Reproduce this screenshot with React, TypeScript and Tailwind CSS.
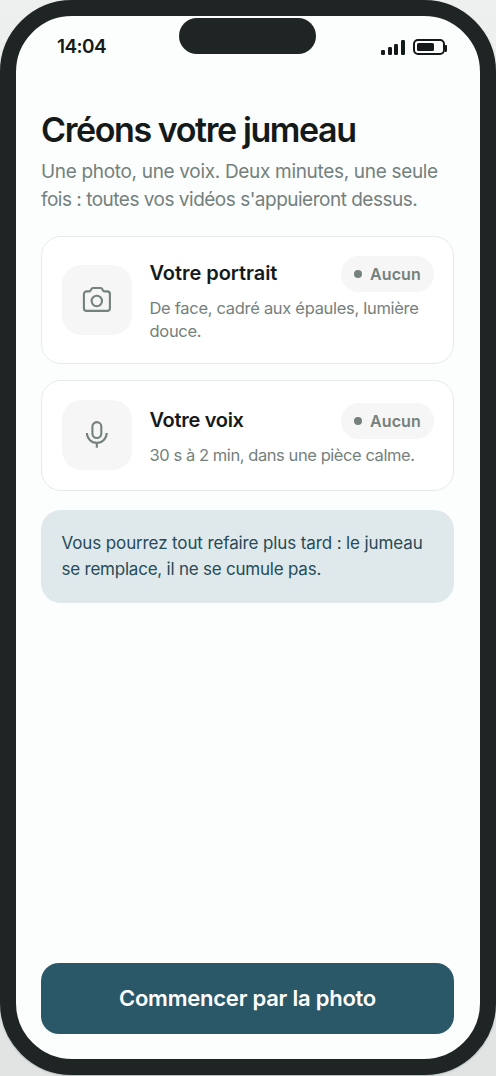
import React from "react";

type StepCardProps = {
  title: string;
  titleClass: string;
  status: string;
  icon: React.ReactNode;
  className: string;
  bodyClass?: string;
  children: React.ReactNode;
};

const CameraIcon = () => (
  <svg width="30" height="30" viewBox="0 0 30 30" fill="none" stroke="currentColor" strokeWidth="2.1" strokeLinejoin="round">
    <path d="M4.6 6.4h2.1c.9 0 1.5-.3 1.9-1l.8-1.4c.3-.7.8-1 1.5-1h7.8c.7 0 1.2.3 1.5 1l.8 1.4c.4.7 1 1 1.9 1h2.3a2.7 2.7 0 0 1 2.7 2.7v14.1a2.7 2.7 0 0 1-2.7 2.7H4.6a2.7 2.7 0 0 1-2.7-2.7V9.1a2.7 2.7 0 0 1 2.7-2.7Z" />
    <circle cx="14.8" cy="16" r="5.2" />
  </svg>
);

const MicIcon = () => (
  <svg width="30" height="30" viewBox="0 0 30 30" fill="none" stroke="currentColor" strokeWidth="2.1">
    <rect x="10.4" y="2.1" width="8.9" height="15.9" rx="4.45" />
    <path d="M4.9 13a9.9 9.8 0 0 0 19.8 0M14.8 22.8v4.9" />
  </svg>
);

const SignalIcon = () => (
  <svg width="24" height="15" viewBox="0 0 24 15" fill="currentColor">
    <rect x="0" y="10" width="4" height="5" rx="1.2" />
    <rect x="7" y="7" width="4" height="8" rx="1.2" />
    <rect x="13" y="4" width="4" height="11" rx="1.2" />
    <rect x="20" y="0" width="4" height="15" rx="1.2" />
  </svg>
);

const BatteryIcon = () => (
  <svg width="34" height="16" viewBox="0 0 34 16" fill="none">
    <rect x="1" y="1" width="30" height="14" rx="4" stroke="currentColor" strokeWidth="2" />
    <rect x="4" y="4" width="17" height="8" rx="1.5" fill="currentColor" />
    <path d="M32 6h.8c.8 0 1.2.5 1.2 1.2v4.6c0 .7-.4 1.2-1.2 1.2H32z" fill="currentColor" />
  </svg>
);

const StepCard = ({ title, titleClass, status, icon, className, bodyClass, children }: StepCardProps) => (
  <article className={`flex items-center gap-[17.5px] rounded-[20px] border border-[#e6eaea] bg-white pr-[19px] pl-5 ${className}`}>
    <div className="flex size-[70px] shrink-0 items-center justify-center rounded-[20px] bg-[#f6f6f6] text-[#74817c]">
      {icon}
    </div>
    <div className={`min-w-0 flex-1 ${bodyClass ?? ""}`}>
      <div className="flex h-9 items-center justify-between">
        <h2 className={`whitespace-nowrap pb-0.5 text-[20px] font-semibold text-[#141a19] ${titleClass}`}>{title}</h2>
        <span className="flex h-9 w-[93px] shrink-0 items-center gap-2 rounded-full bg-[#f6f6f6] pl-[13px] text-[16px] font-semibold tracking-[0.1px] text-[#74817c]">
          <i className="size-2 rounded-full bg-[#74817c]" />
          {status}
        </span>
      </div>
      <p className="mt-[5px] whitespace-nowrap text-[16.5px] leading-[23px] text-[#74817c]">{children}</p>
    </div>
  </article>
);

export default function App() {
  return (
    <div className="h-[1076px] w-[496px] bg-linear-to-b from-[#eeefef] to-[#e2e4e4] font-['Inter',sans-serif]">
      <div className="relative flex h-[1075px] flex-col rounded-[72px] border-16 border-[#1e2524] bg-[#fcfdfd] pr-[26px] pl-[25px] shadow-[0_1px_2px_#aab5b3]">
        <div className="absolute top-[2px] left-[163px] h-9 w-[137px] rounded-full bg-[#1e2524]" />
        <header className="flex h-[62px] shrink-0 items-center justify-between pr-[7px] pl-4 text-[#141a19]">
          <time className="text-[19px] font-semibold tracking-[-0.6px]">14:04</time>
          <div className="flex items-center gap-2">
            <SignalIcon />
            <BatteryIcon />
          </div>
        </header>
        <main className="flex flex-1 flex-col">
          <h1 className="mt-8 whitespace-nowrap text-[34px] leading-10 font-semibold tracking-[-1.4px] text-[#141a19]">
            Créons votre jumeau
          </h1>
          <p className="mt-2 whitespace-nowrap text-[19px] leading-7 text-[#74817c]">
            <span className="tracking-[-0.32px]">Une photo, une voix. Deux minutes, une seule</span>
            <br />
            <span className="tracking-[-0.5px]">fois : toutes vos vidéos s'appuieront dessus.</span>
          </p>
          <StepCard
            title="Votre portrait"
            titleClass="tracking-[-0.05px]"
            status="Aucun"
            icon={<CameraIcon />}
            className="mt-[22px] h-32"
            bodyClass="pb-0.5"
          >
            <span className="tracking-[-0.3px]">De face, cadré aux épaules, lumière</span>
            <br />
            <span className="tracking-[-0.3px]">douce.</span>
          </StepCard>
          <StepCard
            title="Votre voix"
            titleClass="tracking-[-0.3px]"
            status="Aucun"
            icon={<MicIcon />}
            className="mt-4 h-[111px] pb-px"
            bodyClass="pb-px"
          >
            <span className="tracking-[-0.43px]">30 s à 2 min, dans une pièce calme.</span>
          </StepCard>
          <p className="mt-[19px] h-[93px] rounded-[20px] bg-[#dfe9eb] px-[20.5px] pt-5 whitespace-nowrap text-[17px] leading-[26px] text-[#264b59]">
            <span className="tracking-[-0.12px]">Vous pourrez tout refaire plus tard : le jumeau</span>
            <br />
            <span className="tracking-[-0.22px]">se remplace, il ne se cumule pas.</span>
          </p>
          <button className="mt-auto mb-[25px] h-[71px] rounded-[18px] bg-[#2b5868] text-[22px] font-semibold tracking-[-0.23px] text-white">
            Commencer par la photo
          </button>
        </main>
      </div>
    </div>
  );
}
